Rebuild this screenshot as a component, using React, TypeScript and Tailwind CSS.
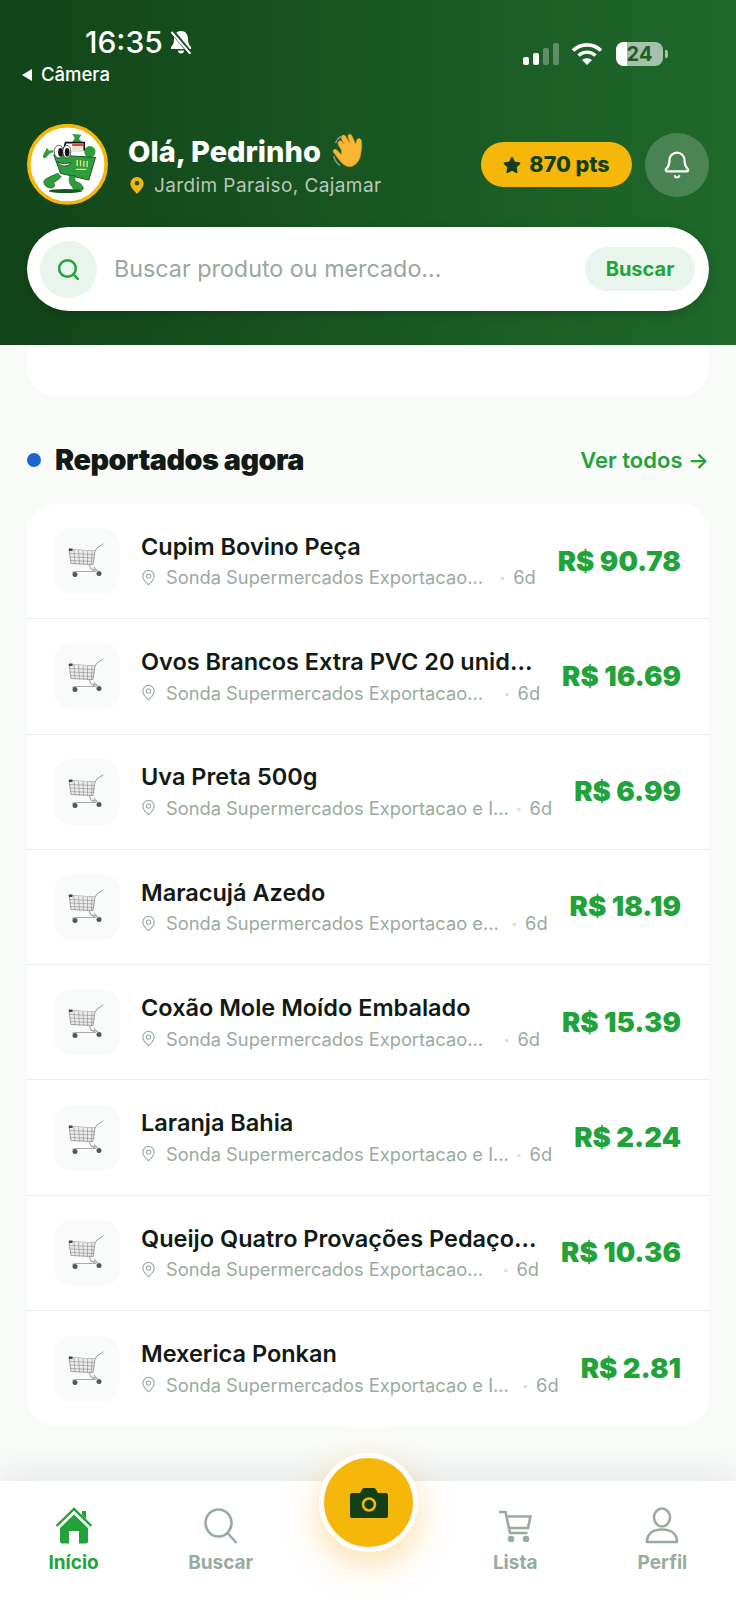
import { Bell, Search, MapPin } from "lucide-react";
import { FaStar } from "react-icons/fa";

const reports = [
  { name: "Cupim Bovino Peça", store: "Sonda Supermercados Exportacao...", price: "R$ 90.78" },
  { name: "Ovos Brancos Extra PVC 20 unid...", store: "Sonda Supermercados Exportacao...", price: "R$ 16.69" },
  { name: "Uva Preta 500g", store: "Sonda Supermercados Exportacao e I...", price: "R$ 6.99" },
  { name: "Maracujá Azedo", store: "Sonda Supermercados Exportacao e...", price: "R$ 18.19" },
  { name: "Coxão Mole Moído Embalado", store: "Sonda Supermercados Exportacao...", price: "R$ 15.39" },
  { name: "Laranja Bahia", store: "Sonda Supermercados Exportacao e I...", price: "R$ 2.24" },
  { name: "Queijo Quatro Provações Pedaço...", store: "Sonda Supermercados Exportacao...", price: "R$ 10.36" },
  { name: "Mexerica Ponkan", store: "Sonda Supermercados Exportacao e I...", price: "R$ 2.81" },
];

const Mascot = () => (
  <svg viewBox="22 42 238 243" className="w-full h-full">
    <circle cx="141" cy="163" r="116" fill="#fff" stroke="#f5b80a" strokeWidth="11" />
    <ellipse cx="135" cy="243" rx="50" ry="6" fill="#14591f" />
    <path d="M155 72l28 2-8 12 10 10-30 0 8-11z" fill="#2e9e3c" />
    <path d="M130 118l5-20h56v24" fill="none" stroke="#141414" strokeWidth="5" />
    <rect x="155" y="100" width="32" height="26" fill="#e9e3d8" />
    <rect x="155" y="100" width="32" height="8" fill="#d8404a" />
    <circle cx="208" cy="125" r="17" fill="#2e9e3c" />
    <path d="M100 135l125 7-20 68-85-20z" fill="#2e9e3c" stroke="#14591f" strokeWidth="3" />
    <path d="M170 150v18M180 151v18M190 152v18M200 153v18M166 178h32" stroke="#e8e08a" strokeWidth="4" />
    <path d="M98 128c-10-2-14 8-20 14-6 5-12 4-10-6 2-8 8-12 10-22 4 2 6 4 6 8l14-2z" fill="#2e9e3c" />
    <ellipse cx="115" cy="125" rx="14" ry="19" fill="#fff" stroke="#141414" strokeWidth="2" />
    <ellipse cx="139" cy="125" rx="12" ry="19" fill="#fff" stroke="#141414" strokeWidth="2" />
    <ellipse cx="120" cy="127" rx="7" ry="13" fill="#141414" />
    <ellipse cx="140" cy="127" rx="7" ry="13" fill="#141414" />
    <path d="M112 155c10 8 28 8 38 2-2 14-32 16-38-2z" fill="#fff" stroke="#141414" strokeWidth="2" />
    <path d="M112 190c-14 6-30 12-40 20-6 8 2 24 20 24 14 0 12-14 6-16 8-4 18-10 24-18z" fill="#2e9e3c" stroke="#14591f" strokeWidth="2" />
    <path d="M148 195c-4 14-2 28 8 36l4 8h28c2-12-10-22-22-24-4-6-4-12-2-18z" fill="#2e9e3c" stroke="#14591f" strokeWidth="2" />
  </svg>
);

const WaveHand = () => (
  <svg viewBox="0 0 36 38" className="w-[36px] h-[36px]">
    <path d="M3 10c1-3 3-5 5-6M1 25c1 4 3 7 6 9" fill="none" stroke="#8a9a8c" strokeWidth="1.6" strokeLinecap="round" />
    <path
      d="M9 18c-2-3-5-7-3-9s4 0 6 3L9 6c-1-3 2-5 4-3l5 8-2-7c-1-3 3-4 4-1l4 9 1-4c1-3 4-3 5 0 1 5 0 11-1 16-2 8-8 13-14 11-6-2-9-8-14-14-2-3 1-5 3-3l5 5z"
      fill="#f7b733"
      stroke="#d99422"
      strokeWidth="0.8"
    />
  </svg>
);

const CartPhoto = () => (
  <svg viewBox="0 0 38 36" className="w-[38px] h-[36px]" fill="none">
    <path d="M1 6.500l26 1.500 2-3 6-4" stroke="#9a9a9a" strokeWidth="1" strokeLinecap="round" />
    <path d="M1 6.500l2 14 22 1 2-13.500" fill="#ececec" stroke="#8a8a8a" strokeWidth="0.8" />
    <path
      d="M6 7l1 14M10.500 7l1 14.500M15 7.500l.5 14M19.500 8l0 14M24 8l-.5 14M1.500 10.500l25 1M2 14l24.500 1M2.500 17.500l23.500 1"
      stroke="#8a8a8a"
      strokeWidth="0.6"
    />
    <rect x="1" y="5.500" width="3.500" height="2.500" fill="#444" />
    <path d="M21 21l2 5 5 2.500H7l-3 1M23 26l6 .5" stroke="#aaa" strokeWidth="1.100" />
    <circle cx="7" cy="31.500" r="2.500" fill="#555" />
    <circle cx="31" cy="30.500" r="2.500" fill="#555" />
    <path d="M26 24l3 4 2 0" stroke="#aaa" strokeWidth="1.100" />
  </svg>
);

const ReportRow = ({ name, store, price, last }: { name: string; store: string; price: string; last: boolean }) => (
  <div className={`flex items-center h-[115.300px] pl-[27px] pr-[28px] ${last ? "" : "border-b border-[#e9eeea]"}`}>
    <div className="w-[66px] h-[66px] shrink-0 rounded-[18px] bg-[#f9fbfa] flex items-center justify-center">
      <CartPhoto />
    </div>
    <div className="flex-1 min-w-0 ml-[21px] mr-[22px] pt-[2px]">
      <div className="whitespace-nowrap text-[23.500px] leading-[30px] font-semibold text-[#111a14]">{name}</div>
      <div className="flex items-center mt-[0.500px] text-[18.300px] leading-[30px] text-[#9aaba0]">
        <MapPin size={17} strokeWidth={1.6} className="shrink-0 -ml-[1px] mr-[9px]" />
        <span className="flex-1 min-w-0 whitespace-nowrap">{store}</span>
        <span className="shrink-0 mr-[8px] text-[#d5dcd7] text-[10px]">•</span>
        <span className="shrink-0">6d</span>
      </div>
    </div>
    <div className="shrink-0 text-[27.500px] font-black text-[#22a33a]">{price}</div>
  </div>
);

const App = () => (
  <div className="w-[736px] h-[1600px] overflow-hidden flex flex-col bg-[#f9fbf9] font-['Inter',sans-serif] relative">
    <header className="h-[345px] shrink-0 bg-gradient-to-r from-[#124419] to-[#1f692b] px-[27px] text-white">
      <div className="flex justify-between h-[124px]">
        <div className="pt-[22px]">
          <div className="flex items-center ml-[58px] h-[40px]">
            <span className="text-[30px] font-medium leading-none">16:35</span>
            <svg viewBox="0 0 24 24" className="w-[24px] h-[24px] ml-[6px]">
              <path d="M12 1c4.500 0 7 3.500 7 8 0 4 1 6 3 8v2H2v-2c2-2 3-4 3-8 0-4.500 2.500-8 7-8z" fill="#fff" />
              <path d="M9 20.500h6a3 3 0 01-6 0z" fill="#fff" />
              <path d="M3 1l19 23" stroke="#16501f" strokeWidth="4.500" />
              <path d="M2.500 2l19 22" stroke="#fff" strokeWidth="2" />
            </svg>
          </div>
          <div className="flex items-center h-[24px] mt-[1px] -ml-[5px]">
            <span className="w-0 h-0 border-y-[6px] border-y-transparent border-r-[10px] border-r-white" />
            <span className="ml-[9px] text-[18.500px] font-medium">Câmera</span>
          </div>
        </div>
        <div className="flex items-start pt-[42px] pr-[41px]">
          <div className="flex items-end h-[23px] gap-[3.500px]">
            <span className="w-[6.500px] h-[8px] rounded-[2px] bg-white" />
            <span className="w-[6.500px] h-[12px] rounded-[2px] bg-white" />
            <span className="w-[6.500px] h-[17px] rounded-[2px] bg-white/30" />
            <span className="w-[6.500px] h-[22px] rounded-[2px] bg-white/30" />
          </div>
          <svg viewBox="0 0 32 23" className="w-[32px] h-[23px] ml-[12px]" fill="none" stroke="#fff">
            <path d="M2 8.500C10 1 22 1 30 8.500" strokeWidth="3.600" />
            <path d="M7.500 13.500c5-4.500 12-4.500 17 0" strokeWidth="3.400" />
            <path d="M16 23l-5-5c3-2.500 7-2.500 10 0z" fill="#fff" stroke="none" />
          </svg>
          <div className="ml-[13px] flex items-center">
            <div className="relative w-[47px] h-[24px] rounded-[8px] overflow-hidden bg-white/60 flex items-center justify-center">
              <span className="absolute left-0 top-0 bottom-0 w-[11px] bg-white" />
              <span className="relative text-[20px] font-bold text-[#1d5c28] leading-none">24</span>
            </div>
            <span className="ml-[2px] w-[3px] h-[8px] rounded-r-[2px] bg-white/60" />
          </div>
        </div>
      </div>

      <div className="flex items-center h-[81px]">
        <div className="w-[81px] h-[81px] shrink-0">
          <Mascot />
        </div>
        <div className="ml-[20px] flex-1 min-w-0 -mt-[1px]">
          <div className="flex items-center h-[36px]">
            <span className="text-[29px] font-extrabold leading-none">Olá, Pedrinho</span>
            <span className="ml-[11px]">
              <WaveHand />
            </span>
          </div>
          <div className="flex items-center mt-[7px] text-[19px] tracking-[0.4px] text-white/70 leading-none whitespace-nowrap">
            <svg viewBox="0 0 14 18" className="w-[14px] h-[17px] ml-[2px] mr-[10px]">
              <path d="M7 0a7 7 0 017 7c0 4-4 8-7 11-3-3-7-7-7-11a7 7 0 017-7z" fill="#f5b80a" />
              <circle cx="7" cy="6.500" r="2.500" fill="#1a5a24" />
            </svg>
            Jardim Paraiso, Cajamar
          </div>
        </div>
        <div className="w-[151px] h-[45px] rounded-full bg-[#f5b80a] flex items-center justify-center gap-[8px] text-[#123f18] text-[21.500px] font-extrabold">
          <FaStar size={18} />
          870 pts
        </div>
        <div className="ml-[13px] w-[64px] h-[64px] rounded-full bg-white/20 flex items-center justify-center">
          <Bell size={30} strokeWidth={1.8} />
        </div>
      </div>

      <div className="mt-[22px] h-[84px] rounded-full bg-white shadow-[0_3px_10px_rgba(0,0,0,0.18)] flex items-center pl-[13px] pr-[14px]">
        <div className="w-[57px] h-[57px] rounded-full bg-[#e9f5ec] flex items-center justify-center">
          <Search size={25} strokeWidth={2.4} className="text-[#22a33a]" />
        </div>
        <input
          readOnly
          placeholder="Buscar produto ou mercado..."
          className="flex-1 min-w-0 ml-[17px] bg-transparent outline-none text-[23.300px] placeholder:text-[#98a89e]"
        />
        <div className="w-[110px] h-[44px] rounded-full bg-[#e9f5ec] flex items-center justify-center text-[20px] font-bold text-[#22a33a]">
          Buscar
        </div>
      </div>
    </header>

    <main className="flex-1 min-h-0 overflow-hidden px-[27px]">
      <div className="h-[51px] bg-white rounded-b-[28px]" />
      <div className="flex items-center justify-between h-[36px] mt-[46px]">
        <div className="flex items-center">
          <span className="w-[14px] h-[14px] rounded-full bg-[#1a66cc]" />
          <h2 className="ml-[14px] text-[28.800px] font-black tracking-[-0.5px] text-[#111a14]">Reportados agora</h2>
        </div>
        <span className="text-[22px] font-semibold text-[#22a33a]">Ver todos →</span>
      </div>
      <div className="mt-[26px] bg-white rounded-[28px] overflow-hidden">
        {reports.map((r, i) => (
          <ReportRow key={i} {...r} last={i === reports.length - 1} />
        ))}
      </div>
    </main>

    <nav className="h-[119px] shrink-0 bg-white shadow-[0_-10px_30px_rgba(40,70,50,0.09)] grid grid-cols-5 relative">
      <div className="flex flex-col items-center pt-[26px] text-[#22a33a]">
        <svg viewBox="0 0 38 37" className="w-[38px] h-[37px]">
          <path d="M1.500 19L19 2l17.500 17" fill="none" stroke="currentColor" strokeWidth="2.400" />
          <path d="M27 4h4v8l-4-4z" fill="currentColor" />
          <path d="M5 21L19 7.500 33 21v13a2.500 2.500 0 01-2.500 2.500H24V24h-10v12.500H7.500A2.500 2.500 0 015 34z" fill="currentColor" />
        </svg>
        <span className="mt-[5px] text-[19px] font-bold">Início</span>
      </div>
      <div className="flex flex-col items-center pt-[26px] text-[#98ab9f]">
        <svg viewBox="0 0 34 37" className="w-[34px] h-[37px]" fill="none" stroke="currentColor" strokeWidth="2.600">
          <ellipse cx="14.500" cy="16" rx="13" ry="13.500" />
          <path d="M23.500 26l9 10" />
        </svg>
        <span className="mt-[5px] text-[19px] font-bold">Buscar</span>
      </div>
      <div />
      <div className="flex flex-col items-center pt-[26px] text-[#98ab9f]">
        <svg viewBox="0 0 34 37" className="w-[34px] h-[37px]" fill="none" stroke="currentColor" strokeWidth="2.600">
          <path d="M1 5h6.500l4.500 21h17.500" />
          <path d="M8 9.500h24.500L30 21H11" />
          <circle cx="13" cy="32" r="2" fill="currentColor" />
          <circle cx="28" cy="32" r="2" fill="currentColor" />
        </svg>
        <span className="mt-[5px] text-[19px] font-bold">Lista</span>
      </div>
      <div className="flex flex-col items-center pt-[26px] text-[#98ab9f]">
        <svg viewBox="0 0 34 37" className="w-[34px] h-[37px]" fill="none" stroke="currentColor" strokeWidth="2.600">
          <ellipse cx="17" cy="10.500" rx="8" ry="9" />
          <path d="M2 35c0-9 7-12.500 15-12.500S32 26 32 35z" strokeLinejoin="round" />
        </svg>
        <span className="mt-[5px] text-[19px] font-bold">Perfil</span>
      </div>
      <div className="absolute left-[319px] -top-[28px] w-[99px] h-[99px] rounded-full bg-[#f5b80a] border-[5px] border-white shadow-[0_12px_34px_rgba(245,160,10,0.34)] flex items-center justify-center">
        <svg viewBox="0 0 38 30" className="w-[38px] h-[30px]">
          <path
            d="M2.500 5H10l2-3.500C12.500 .5 13.500 0 14.500 0h9c1 0 2 .5 2.500 1.500L28 5h7.500A2.500 2.500 0 0138 7.500V28a2 2 0 01-2 2H2a2 2 0 01-2-2V7.500A2.500 2.500 0 012.500 5z"
            fill="#123f18"
          />
          <circle cx="19" cy="16.500" r="6" fill="none" stroke="#f5b80a" strokeWidth="2.600" />
        </svg>
      </div>
    </nav>
  </div>
);

export default App;
